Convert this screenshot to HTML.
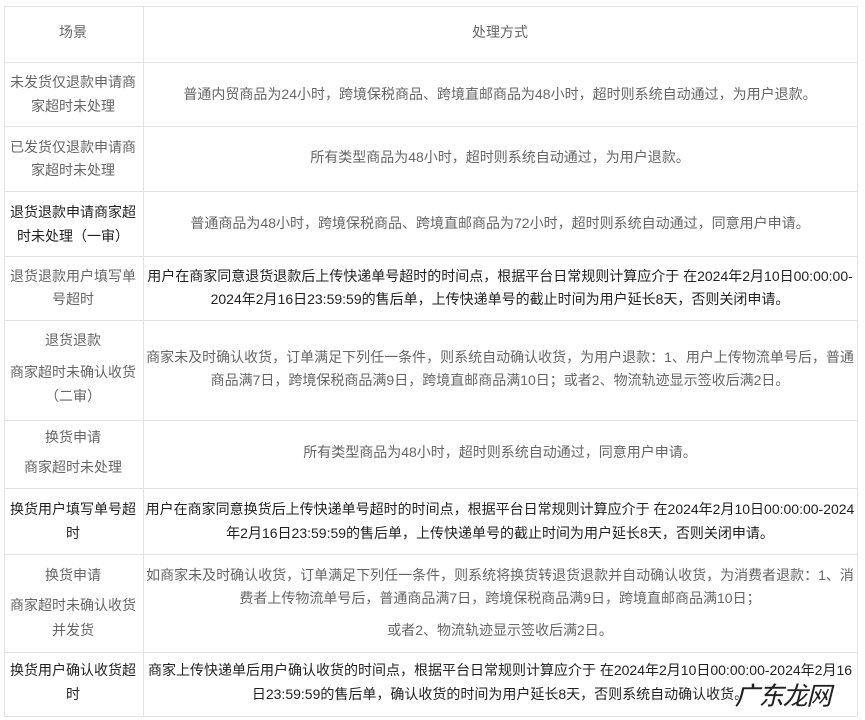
<!DOCTYPE html>
<html><head><meta charset="utf-8"><style>
body{margin:0;width:865px;height:720px;background:#fff;position:relative;overflow:hidden;font-family:"Liberation Sans","Noto Sans CJK SC",sans-serif;font-size:14px;color:#666}
.h{position:absolute;left:4px;width:853px;height:1px;background:#e3e3e3}
.v{position:absolute;top:6px;height:710px;width:1px;background:#e3e3e3}
.t{position:absolute;white-space:nowrap;transform:translate(-50%,-50%);line-height:16px}
.d{color:#222}
.wm{position:absolute;left:734px;top:676px;font-size:26px;font-weight:bold;font-style:italic;color:#222;-webkit-text-stroke:1px #fff;letter-spacing:-2px}
</style></head><body>
<div class="h" style="top:6px"></div><div class="h" style="top:62px"></div><div class="h" style="top:126px"></div><div class="h" style="top:191px"></div><div class="h" style="top:256px"></div><div class="h" style="top:320px"></div><div class="h" style="top:420px"></div><div class="h" style="top:488px"></div><div class="h" style="top:554px"></div><div class="h" style="top:652px"></div><div class="h" style="top:716px"></div>
<div class="v" style="left:4px"></div><div class="v" style="left:143px"></div><div class="v" style="left:857px"></div>

<div class="t" style="left:73px;top:32px">场景</div>
<div class="t" style="left:500px;top:32px">处理方式</div>

<div class="t" style="left:73px;top:82px">未发货仅退款申请商</div>
<div class="t" style="left:73px;top:106px">家超时未处理</div>
<div class="t" style="left:500px;top:94px">普通内贸商品为24小时，跨境保税商品、跨境直邮商品为48小时，超时则系统自动通过，为用户退款。</div>

<div class="t" style="left:73px;top:147px">已发货仅退款申请商</div>
<div class="t" style="left:73px;top:170px">家超时未处理</div>
<div class="t" style="left:500px;top:157px">所有类型商品为48小时，超时则系统自动通过，为用户退款。</div>

<div class="t d" style="left:73px;top:212px">退货退款申请商家超</div>
<div class="t d" style="left:73px;top:236px">时未处理（一审）</div>
<div class="t" style="left:500px;top:223px">普通商品为48小时，跨境保税商品、跨境直邮商品为72小时，超时则系统自动通过，同意用户申请。</div>

<div class="t" style="left:73px;top:276px">退货退款用户填写单</div>
<div class="t" style="left:73px;top:299px">号超时</div>
<div class="t d" style="left:500px;top:276px">用户在商家同意退货退款后上传快递单号超时的时间点，根据平台日常规则计算应介于 在2024年2月10日00:00:00-</div>
<div class="t d" style="left:500px;top:299px">2024年2月16日23:59:59的售后单，上传快递单号的截止时间为用户延长8天，否则关闭申请。</div>

<div class="t" style="left:73px;top:340px">退货退款</div>
<div class="t" style="left:73px;top:372px">商家超时未确认收货</div>
<div class="t" style="left:73px;top:396px">（二审）</div>
<div class="t" style="left:500px;top:357px">商家未及时确认收货，订单满足下列任一条件，则系统自动确认收货，为用户退款：1、用户上传物流单号后，普通</div>
<div class="t" style="left:500px;top:380px">商品满7日，跨境保税商品满9日，跨境直邮商品满10日；或者2、物流轨迹显示签收后满2日。</div>

<div class="t" style="left:73px;top:437px">换货申请</div>
<div class="t" style="left:73px;top:467px">商家超时未处理</div>
<div class="t" style="left:500px;top:452px">所有类型商品为48小时，超时则系统自动通过，同意用户申请。</div>

<div class="t d" style="left:73px;top:509px">换货用户填写单号超</div>
<div class="t d" style="left:73px;top:533px">时</div>
<div class="t d" style="left:500px;top:509px">用户在商家同意换货后上传快递单号超时的时间点，根据平台日常规则计算应介于 在2024年2月10日00:00:00-2024</div>
<div class="t d" style="left:500px;top:533px">年2月16日23:59:59的售后单，上传快递单号的截止时间为用户延长8天，否则关闭申请。</div>

<div class="t" style="left:73px;top:575px">换货申请</div>
<div class="t" style="left:73px;top:605px">商家超时未确认收货</div>
<div class="t" style="left:73px;top:630px">并发货</div>
<div class="t" style="left:500px;top:575px">如商家未及时确认收货，订单满足下列任一条件，则系统将换货转退货退款并自动确认收货，为消费者退款：1、消</div>
<div class="t" style="left:500px;top:598px">费者上传物流单号后，普通商品满7日，跨境保税商品满9日，跨境直邮商品满10日；</div>
<div class="t" style="left:500px;top:630px">或者2、物流轨迹显示签收后满2日。</div>

<div class="t d" style="left:73px;top:670px">换货用户确认收货超</div>
<div class="t d" style="left:73px;top:694px">时</div>
<div class="t d" style="left:500px;top:670px">商家上传快递单后用户确认收货的时间点，根据平台日常规则计算应介于 在2024年2月10日00:00:00-2024年2月16</div>
<div class="t d" style="left:500px;top:694px">日23:59:59的售后单，确认收货的时间为用户延长8天，否则系统自动确认收货。</div>

<div class="wm">广东龙网</div>
</body></html>
